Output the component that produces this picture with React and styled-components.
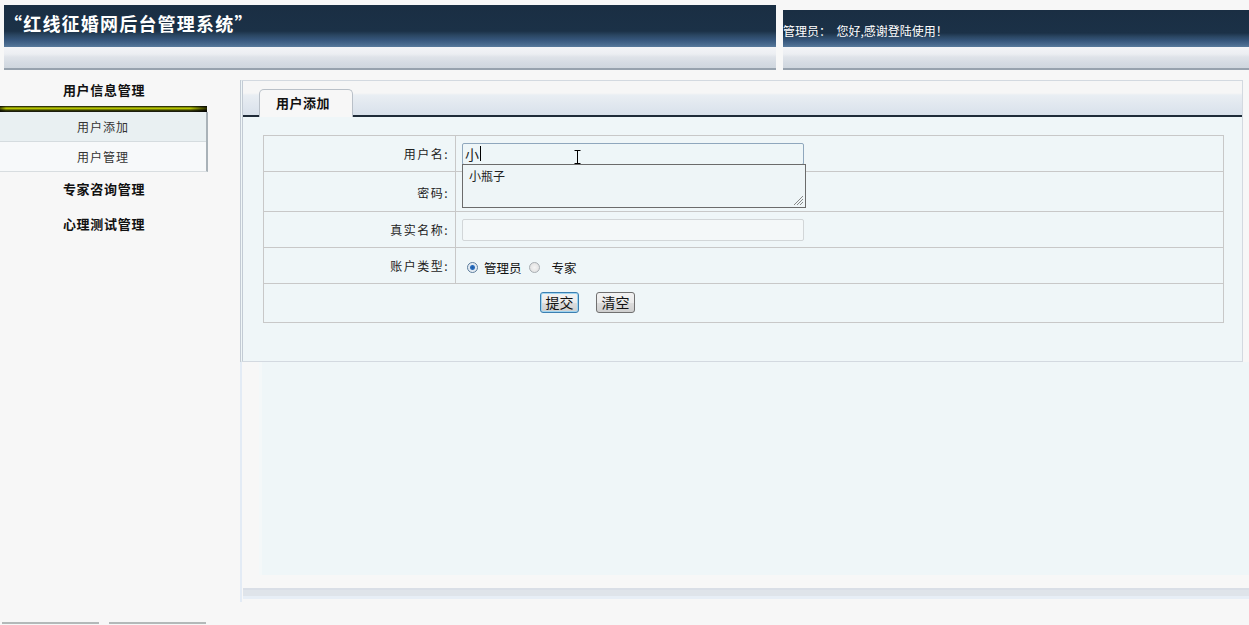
import React from 'react';
import styled, {createGlobalStyle} from 'styled-components';

const GlobalStyle = createGlobalStyle`
    html, body {
        margin: 0;
        padding: 0;
        background: #f7f7f7;
        overflow: hidden;
    }
    body {
        font-family: "Noto Sans CJK SC", "Noto Sans", sans-serif;
        font-size: 12px;
        color: #222;
    }
`;

const menus = [
    {title: '用户信息管理', items: ['用户添加', '用户管理']},
    {title: '专家咨询管理', items: []},
    {title: '心理测试管理', items: []}
];

const App = () => (
    <Page>
        <GlobalStyle />
        <Header>
            <HeaderBar $width="772px" $height="65px">
                <HeaderDark>
                    <Title>“红线征婚网后台管理系统”</Title>
                </HeaderDark>
                <HeaderLight />
            </HeaderBar>
            <HeaderBar $grow $height="60px">
                <HeaderDark>
                    <Welcome>管理员：&nbsp;&nbsp;您好,感谢登陆使用！</Welcome>
                </HeaderDark>
                <HeaderLight />
            </HeaderBar>
        </Header>

        <Body>
            <Sidebar>
                {menus.map((menu, i) => (
                    <MenuGroup key={menu.title}>
                        <MenuTitle $first={i === 0}>{menu.title}</MenuTitle>
                        {menu.items.length > 0 && (
                            <>
                                <MenuBar />
                                <SubMenu>
                                    {menu.items.map((item, j) => (
                                        <SubItem key={item} $alt={j % 2 === 1}>{item}</SubItem>
                                    ))}
                                </SubMenu>
                            </>
                        )}
                    </MenuGroup>
                ))}
                <SideFooter>
                    <FooterLine />
                    <FooterLine />
                </SideFooter>
            </Sidebar>

            <Main>
                <Panel>
                    <TabBar>
                        <Tab>用户添加</Tab>
                    </TabBar>
                    <FormWrap>
                        <FormTable>
                            <tbody>
                                <tr>
                                    <LabelCell>用户名:</LabelCell>
                                    <FieldCell>
                                        <InputBox $focused>
                                            小<Caret />
                                            <Cursor viewBox="0 0 7 14" width="7" height="14">
                                                <path d="M0.5 0.5h6M3.5 0.5v13M0.5 13.5h6" stroke="#000" strokeWidth="1" fill="none" />
                                            </Cursor>
                                        </InputBox>
                                        <Suggest>
                                            小瓶子
                                            <Grip viewBox="0 0 12 12" width="12" height="12">
                                                <path d="M11 2L2 11M11 5L5 11M11 8L8 11" stroke="#888" strokeWidth="1" />
                                            </Grip>
                                        </Suggest>
                                    </FieldCell>
                                </tr>
                                <tr>
                                    <LabelCell $h="40px" $pt="2px">密码:</LabelCell>
                                    <FieldCell />
                                </tr>
                                <tr>
                                    <LabelCell>真实名称:</LabelCell>
                                    <FieldCell>
                                        <InputBox />
                                    </FieldCell>
                                </tr>
                                <tr>
                                    <LabelCell $h="36px">账户类型:</LabelCell>
                                    <FieldCell>
                                        <RadioGroup>
                                            <Radio $checked />
                                            <RadioLabel>管理员</RadioLabel>
                                            <Radio />
                                            <RadioLabel $gap="12px">专家</RadioLabel>
                                        </RadioGroup>
                                    </FieldCell>
                                </tr>
                                <tr>
                                    <ButtonCell colSpan={2}>
                                        <Button $primary>提交</Button>
                                        <Button>清空</Button>
                                    </ButtonCell>
                                </tr>
                            </tbody>
                        </FormTable>
                    </FormWrap>
                </Panel>
                <LowerPanel>
                    <LowerInner />
                    <LowerBottom />
                </LowerPanel>
            </Main>
        </Body>
    </Page>
);

const Page = styled.div`
    width: 1249px;
    height: 625px;
    display: flex;
    flex-direction: column;
`;

const Header = styled.div`
    display: flex;
    align-items: flex-end;
    gap: 7px;
    height: 70px;
    padding-left: 4px;
`;

const HeaderBar = styled.div`
    display: flex;
    flex-direction: column;
    height: ${p => p.$height};
    width: ${p => p.$width || 'auto'};
    flex: ${p => p.$grow ? 1 : 'none'};
`;

const HeaderDark = styled.div`
    flex: 1;
    display: flex;
    align-items: flex-end;
    background: linear-gradient(to bottom,
        #1a2e43 0%, #1b3147 62%, #2a4662 72%, #35557a 82%, #4a6b8f 94%, #587a9c 100%);
`;

const HeaderLight = styled.div`
    height: 23px;
    box-sizing: border-box;
    border-bottom: 2px solid #97a2ae;
    background: linear-gradient(to bottom, #f3f4f7 0, #eceef2 7px, #dfe3e9 10px, #d5dbe3 16px, #cfd6de 100%);
`;

const Title = styled.div`
    font-family: "Noto Sans CJK SC", serif;
    font-size: 18px;
    font-weight: bold;
    color: #fff;
    line-height: 20px;
    padding: 0 0 14px 0;
    letter-spacing: 1.2px;
`;

const Welcome = styled.div`
    font-size: 12px;
    color: #fff;
    line-height: 14px;
    padding: 0 0 9px 0;
`;

const Body = styled.div`
    flex: 1;
    display: flex;
    padding-top: 5px;
    min-height: 0;
`;

const Sidebar = styled.div`
    width: 208px;
    display: flex;
    flex-direction: column;
    flex: none;
`;

const MenuGroup = styled.div``;

const MenuTitle = styled.div`
    height: ${p => p.$first ? '31px' : '35px'};
    line-height: ${p => p.$first ? '30px' : '33px'};
    text-align: center;
    font-size: 13px;
    font-weight: bold;
    letter-spacing: 0.7px;
    color: #111;
`;

const MenuBar = styled.div`
    height: 6px;
    margin-right: 1px;
    background:
        linear-gradient(to right, rgba(0,0,0,0.6) 0, rgba(0,0,0,0) 6px, rgba(0,0,0,0) 190px, rgba(0,0,0,0.8) 207px),
        linear-gradient(to bottom, #151515 0, #4c5600 1px, #c5d200 2px, #a8b600 3px, #3c4300 4px, #111 6px);
`;

const SubMenu = styled.div`
    border-right: 2px solid #a9b2b8;
    border-bottom: 1px solid #d8dde0;
    background: #edf2f4;
`;

const SubItem = styled.div`
    height: 29px;
    line-height: 29px;
    text-align: center;
    font-size: 12px;
    letter-spacing: 1px;
    color: #333;
    background: ${p => p.$alt ? '#f7f9fa' : '#e9f0f2'};
    border-top: ${p => p.$alt ? '1px solid #d5dcdf' : 'none'};
`;

const SideFooter = styled.div`
    margin-top: auto;
    display: flex;
    gap: 10px;
    padding: 0 0 1px 2px;
`;

const FooterLine = styled.div`
    width: 97px;
    height: 2px;
    background: #b3b9b9;
`;

const Main = styled.div`
    flex: 1;
    display: flex;
    flex-direction: column;
    padding: 5px 0 0 32px;
`;

const Panel = styled.div`
    width: 1003px;
    box-sizing: border-box;
    border: 1px solid #d3d9e0;
    border-left: 3px double #c3cbd4;
    background: #eff6f8;
`;

const TabBar = styled.div`
    height: 34px;
    display: flex;
    align-items: flex-end;
    padding-left: 16px;
    border-bottom: 2px solid #1f2b38;
    background: linear-gradient(to bottom, #f6f6f6 0, #f6f6f6 12px, #e9eef3 14px, #dfe6ee 26px, #d9e1ea 100%);
`;

const Tab = styled.div`
    width: 94px;
    height: 28px;
    box-sizing: border-box;
    margin-bottom: -2px;
    padding-left: 16px;
    line-height: 26px;
    font-size: 13px;
    font-weight: bold;
    letter-spacing: 0.5px;
    color: #111;
    background: #f7f7f7;
    border: 1px solid #b9c0c8;
    border-bottom: none;
    border-radius: 5px 5px 0 0;
`;

const FormWrap = styled.div`
    padding: 18px 18px 38px 20px;
`;

const FormTable = styled.table`
    width: 961px;
    border-collapse: collapse;
    border: 1px solid #c8c8c8;
    background: #eff6f8;
    td {
        border: 1px solid #c8c8c8;
    }
`;

const LabelCell = styled.td`
    width: 192px;
    height: ${p => p.$h || '36px'};
    padding: ${p => p.$pt || '0'} 6px 0 0;
    box-sizing: border-box;
    text-align: right;
    font-size: 12px;
    letter-spacing: 1.5px;
    color: #222;
`;

const FieldCell = styled.td`
    position: relative;
    padding: 0 0 0 6px;
`;

const InputBox = styled.div`
    position: relative;
    width: 342px;
    height: 22px;
    box-sizing: border-box;
    border: 1px solid ${p => p.$focused ? '#8fa7bd' : '#d2d6d8'};
    border-radius: 2px;
    background: ${p => p.$focused ? '#eef6f8' : '#f4f8f9'};
    font-size: 14px;
    line-height: 20px;
    padding-left: 2px;
    display: flex;
    align-items: center;
`;

const Caret = styled.span`
    display: inline-block;
    width: 1px;
    height: 15px;
    background: #000;
    margin-left: 1px;
`;

const Cursor = styled.svg`
    position: absolute;
    left: 111px;
    top: 6px;
`;

const Suggest = styled.div`
    position: absolute;
    z-index: 2;
    left: 6px;
    top: 28px;
    width: 344px;
    height: 44px;
    box-sizing: border-box;
    border: 1px solid #6b6b6b;
    background: #eef5f7;
    padding: 4px 0 0 6px;
    font-size: 12px;
    line-height: 14px;
    color: #222;
`;

const Grip = styled.svg`
    position: absolute;
    right: 1px;
    bottom: 1px;
`;

const RadioGroup = styled.div`
    display: flex;
    align-items: center;
    padding-top: 3px;
    padding-left: 5px;
`;

const Radio = styled.span`
    width: 11px;
    height: 11px;
    box-sizing: border-box;
    border-radius: 50%;
    border: 1px solid ${p => p.$checked ? '#5d7d9c' : '#a8aeb3'};
    background: ${p => p.$checked
        ? 'radial-gradient(circle, #1d5aa4 0, #2b6fbf 2px, #dfe8f1 3px, #f4f7fa 100%)'
        : 'radial-gradient(circle, #f4f4f4 0, #dcdcdc 100%)'};
`;

const RadioLabel = styled.span`
    font-size: 12.5px;
    color: #111;
    margin: 0 7px 0 ${p => p.$gap || '6px'};
`;

const ButtonCell = styled.td`
    height: 36px;
    padding: 0 0 2px 276px;
`;

const Button = styled.button`
    height: 21px;
    width: 39px;
    padding: 0;
    margin-right: 17px;
    font-family: "Noto Sans CJK SC", sans-serif;
    font-size: 14px;
    line-height: 17px;
    color: #111;
    border-radius: 3px;
    border: 1px solid ${p => p.$primary ? '#3c7fb1' : '#707070'};
    box-shadow: ${p => p.$primary ? 'inset 0 0 0 1px #9fd4f0' : 'none'};
    background: linear-gradient(to bottom, #f2f2f2 0, #ebebeb 50%, #dddddd 51%, #cfcfcf 100%);
    vertical-align: middle;
`;

const LowerPanel = styled.div`
    width: 1009px;
    height: 240px;
    display: flex;
    flex-direction: column;
    border-left: 2px solid #e3ebf5;
    padding-left: 1px;
`;

const LowerInner = styled.div`
    height: 213px;
    margin-left: 16px;
    background: #eff6f8;
    border-left: 3px solid #f4f8f9;
`;

const LowerBottom = styled.div`
    height: 6px;
    margin-top: 13px;
    border-top: 2px solid #d9dee6;
    border-bottom: 3px solid #e7eef6;
    background: #dfe4ea;
`;

export default App;
